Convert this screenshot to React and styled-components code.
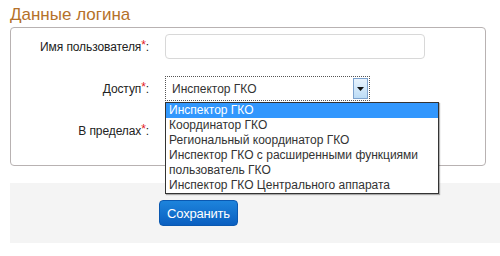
import styled, { createGlobalStyle } from "styled-components";

const GlobalStyle = createGlobalStyle`
  body {
    margin: 0;
    background: #fff;
    font-family: "Liberation Sans", Arial, sans-serif;
  }
`;

const roles = [
  "Инспектор ГКО",
  "Координатор ГКО",
  "Региональный координатор ГКО",
  "Инспектор ГКО с расширенными функциями",
  "пользователь ГКО",
  "Инспектор ГКО Центрального аппарата",
];

export default function App() {
  return (
    <>
      <GlobalStyle />
      <Page>
        <Title>Данные логина</Title>
        <Box>
          <Row>
            <Label>Имя пользователя<Star>*</Star>:</Label>
            <TextInput />
          </Row>
          <Row>
            <Label>Доступ<Star>*</Star>:</Label>
            <SelectWrap>
              <Select>
                <span>Инспектор ГКО</span>
                <Arrow>
                  <svg width="7" height="4" viewBox="0 0 7 4">
                    <path d="M0 0h7L3.5 4z" fill="#111" />
                  </svg>
                </Arrow>
              </Select>
              <List>
                {roles.map((r, i) => (
                  <Option key={r} selected={i === 0}>{r}</Option>
                ))}
              </List>
            </SelectWrap>
          </Row>
          <Row>
            <Label>В пределах<Star>*</Star>:</Label>
          </Row>
        </Box>
        <Footer>
          <Button>Сохранить</Button>
        </Footer>
      </Page>
    </>
  );
}

const Page = styled.div`
  padding-left: 10px;
  padding-top: 4px;
`;

const Title = styled.h2`
  margin: 0;
  font-size: 17px;
  font-weight: normal;
  line-height: 22px;
  color: #b5712a;
`;

const Box = styled.div`
  margin-top: 1px;
  width: 474px;
  height: 131px;
  border: 1px solid #b8b2b2;
  border-radius: 4px;
  padding-top: 6px;
  display: flex;
  flex-direction: column;
  gap: 17px;
`;

const Row = styled.div`
  display: flex;
  align-items: center;
  height: 25px;
`;

const Label = styled.label`
  width: 138px;
  margin-right: 16px;
  text-align: right;
  font-size: 12px;
  letter-spacing: -0.1px;
  color: #222;
`;

const Star = styled.span`
  color: #e2191e;
  position: relative;
  top: -2px;
`;

const TextInput = styled.div`
  width: 258px;
  height: 23px;
  border: 1px solid #d8d8d8;
  border-radius: 4px;
  background: #fff;
`;

const SelectWrap = styled.div`
  position: relative;
  width: 205px;
  height: 25px;
`;

const Select = styled.div`
  box-sizing: border-box;
  width: 205px;
  height: 25px;
  border: 1px dotted #555;
  display: flex;
  align-items: center;
  justify-content: space-between;
  padding: 0 1px 0 6px;
  font-size: 12px;
  color: #333;
  background: #fff;
`;

const Arrow = styled.div`
  width: 15px;
  height: 21px;
  border: 1px solid #7da2ce;
  box-sizing: border-box;
  background: linear-gradient(#e8f3fd, #bcdcf6);
  display: flex;
  align-items: center;
  justify-content: center;
`;

const List = styled.div`
  position: absolute;
  left: 0;
  top: 26px;
  width: 272px;
  border: 1px solid #333;
  background: #fff;
  box-shadow: 1px 1px 1px rgba(0, 0, 0, 0.3);
  z-index: 2;
`;

const Option = styled.div`
  height: 15px;
  line-height: 15px;
  padding-left: 3px;
  font-size: 12px;
  white-space: nowrap;
  color: ${(p) => (p.selected ? "#fff" : "#333")};
  background: ${(p) => (p.selected ? "#3297fd" : "#fff")};
`;

const Footer = styled.div`
  margin-top: 17px;
  height: 60px;
  background: #f4f4f4;
  padding-left: 149px;
  padding-top: 17px;
  box-sizing: border-box;
`;

const Button = styled.button`
  width: 79px;
  height: 26px;
  border: 1px solid #0a58b0;
  border-radius: 4px;
  background: linear-gradient(#1d84dc, #0a5fc0);
  color: #fff;
  font-family: "Liberation Sans", Arial, sans-serif;
  font-size: 13px;
  letter-spacing: -0.2px;
  padding: 0;
`;
